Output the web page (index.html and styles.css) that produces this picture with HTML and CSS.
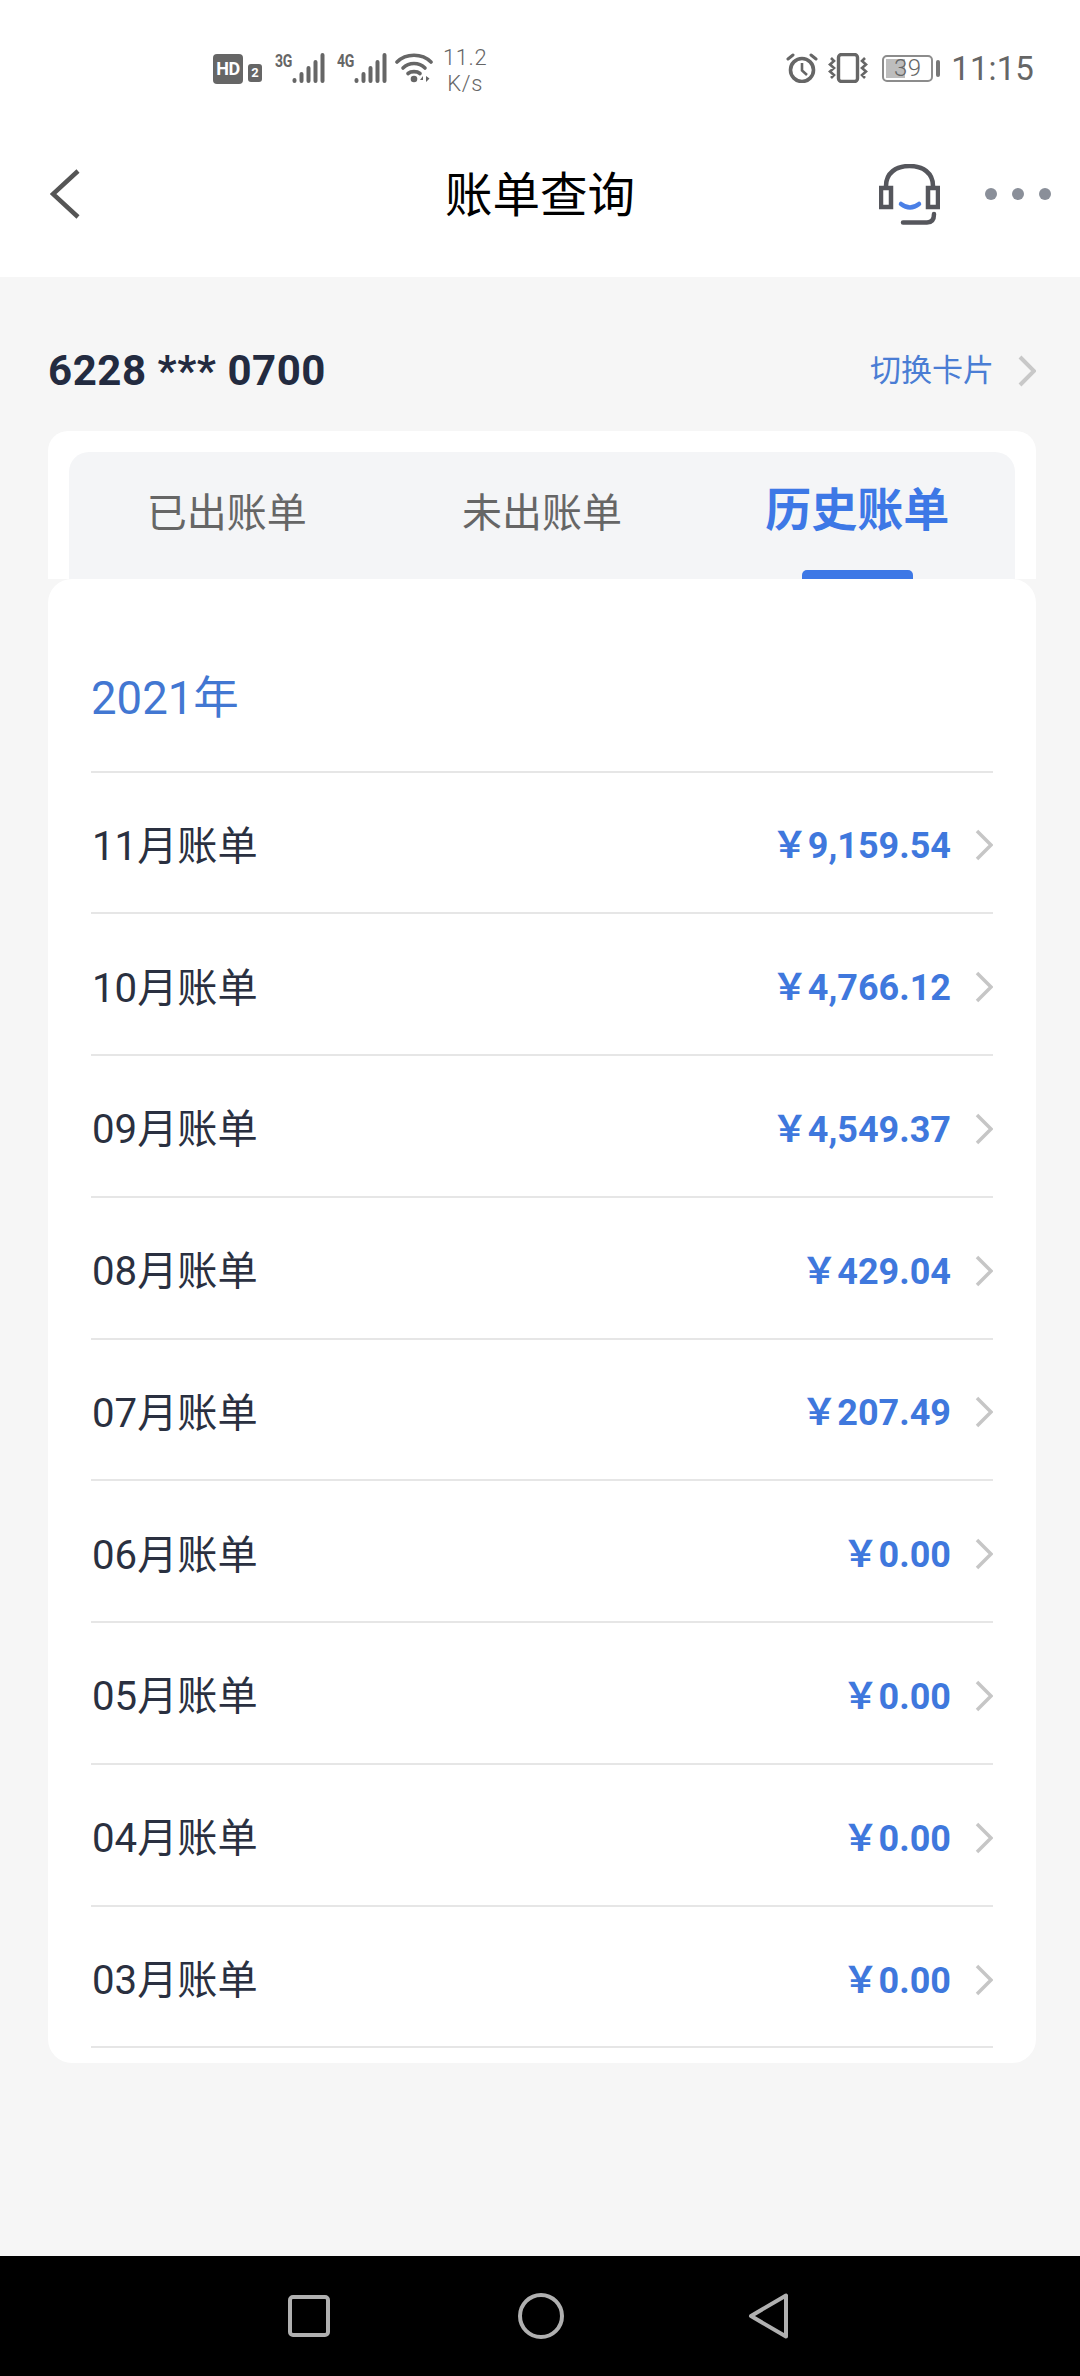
FILE: index.html
```html
<!DOCTYPE html>
<html lang="zh-CN">
<head>
<meta charset="utf-8">
<title>账单查询</title>
<link rel="stylesheet" href="styles.css">
</head>
<body>
<div class="page">
  <div class="status">
    <div class="status-left">
      <span class="hd">HD</span><span class="sim">2</span>
      <span class="net"><span class="net-label">3G</span>
        <svg class="bars" viewBox="0 0 33 30"><g fill="none" stroke="#666" stroke-width="4" stroke-linecap="round"><path d="M2.500 28v-1M9.500 28v-7M16.500 28v-13M23.500 28v-19M30.500 28V2"/></g></svg></span>
      <span class="net net-4g"><span class="net-label">4G</span>
        <svg class="bars" viewBox="0 0 33 30"><g fill="none" stroke="#666" stroke-width="4" stroke-linecap="round"><path d="M2.500 28v-1M9.500 28v-7M16.500 28v-13M23.500 28v-19M30.500 28V2"/></g></svg></span>
      <svg class="wifi" viewBox="0 0 38 30"><g fill="none" stroke="#666" stroke-width="3.600" stroke-linecap="round"><path d="M2 9C11 0 27 0 36 9"/><path d="M8 15C14 9 24 9 30 15"/><path d="M13 20.500C16 18 22 18 25 20.500"/></g><circle cx="19" cy="26" r="3.300" fill="#666"/><path d="M28 29v-6l-3 4h3zM31 23v6l3.500-3.500z" fill="#666"/></svg>
      <span class="speed"><span>11.2</span><span>K/s</span></span>
    </div>
    <div class="status-right">
      <svg class="alarm" viewBox="0 0 32 30"><circle cx="16" cy="17" r="11.500" fill="none" stroke="#666" stroke-width="3.600"/><path d="M16 10v7.500l5 4.500" fill="none" stroke="#666" stroke-width="2.600"/><path d="M2 6l5-4M30 6l-5-4" fill="none" stroke="#666" stroke-width="3" stroke-linecap="round"/></svg>
      <svg class="vibrate" viewBox="0 0 40 30"><rect x="10.500" y="1.500" width="19" height="27" rx="3" fill="none" stroke="#666" stroke-width="3.400"/><path d="M3 5l3 3-4 3.500 4 3.500-4 3.500 4 3.500-3 3M37 5l-3 3 4 3.500-4 3.500 4 3.500-4 3.500 3 3" fill="none" stroke="#666" stroke-width="2.600"/></svg>
      <span class="battery"><span class="battery-fill"></span><span class="battery-num">39</span></span>
      <span class="battery-nub"></span>
      <span class="time">11:15</span>
    </div>
  </div>

  <header class="header">
    <svg class="back" viewBox="0 0 30 50"><path d="M28 2L3 25l25 23" fill="none" stroke="#555" stroke-width="4.500"/></svg>
    <h1 class="title">账单查询</h1>
    <svg class="headset" viewBox="0 0 61 61"><g fill="none" stroke="#55565c" stroke-width="4.500"><path d="M7 22C7 9 17 2 30.500 2S54 9 54 22"/><rect x="2" y="24" width="10" height="19"/><rect x="49" y="24" width="10" height="19"/><path d="M24 58.500H48Q55 58.500 55 50" stroke-linecap="round"/></g><path d="M22 40Q31 47 40 40" fill="none" stroke="#4a7fe6" stroke-width="4.500" stroke-linecap="round"/></svg>
    <div class="dots"><i></i><i></i><i></i></div>
  </header>

  <main class="main">
    <div class="card-row">
      <span class="card-no">6228 *** 0700</span>
      <span class="switch">切换卡片</span>
      <svg class="chev-switch" viewBox="0 0 18 32"><path d="M2 2l14 14L2 30" fill="none" stroke="#c8c8c8" stroke-width="4"/></svg>
    </div>

    <section class="tab-card">
      <div class="tabs">
        <div class="tab">已出账单</div>
        <div class="tab">未出账单</div>
        <div class="tab tab-active">历史账单<span class="indicator"></span></div>
      </div>
    </section>

    <section class="list-card">
      <div class="year">2021年</div>
      <ul class="rows">
        <li class="row"><span class="month">11月账单</span><span class="amount">￥9,159.54</span><svg class="chev" viewBox="0 0 18 32"><path d="M2 2l14 14L2 30" fill="none" stroke="#c6c6c6" stroke-width="3.500"/></svg></li>
        <li class="row"><span class="month">10月账单</span><span class="amount">￥4,766.12</span><svg class="chev" viewBox="0 0 18 32"><path d="M2 2l14 14L2 30" fill="none" stroke="#c6c6c6" stroke-width="3.500"/></svg></li>
        <li class="row"><span class="month">09月账单</span><span class="amount">￥4,549.37</span><svg class="chev" viewBox="0 0 18 32"><path d="M2 2l14 14L2 30" fill="none" stroke="#c6c6c6" stroke-width="3.500"/></svg></li>
        <li class="row"><span class="month">08月账单</span><span class="amount">￥429.04</span><svg class="chev" viewBox="0 0 18 32"><path d="M2 2l14 14L2 30" fill="none" stroke="#c6c6c6" stroke-width="3.500"/></svg></li>
        <li class="row"><span class="month">07月账单</span><span class="amount">￥207.49</span><svg class="chev" viewBox="0 0 18 32"><path d="M2 2l14 14L2 30" fill="none" stroke="#c6c6c6" stroke-width="3.500"/></svg></li>
        <li class="row"><span class="month">06月账单</span><span class="amount">￥0.00</span><svg class="chev" viewBox="0 0 18 32"><path d="M2 2l14 14L2 30" fill="none" stroke="#c6c6c6" stroke-width="3.500"/></svg></li>
        <li class="row"><span class="month">05月账单</span><span class="amount">￥0.00</span><svg class="chev" viewBox="0 0 18 32"><path d="M2 2l14 14L2 30" fill="none" stroke="#c6c6c6" stroke-width="3.500"/></svg></li>
        <li class="row"><span class="month">04月账单</span><span class="amount">￥0.00</span><svg class="chev" viewBox="0 0 18 32"><path d="M2 2l14 14L2 30" fill="none" stroke="#c6c6c6" stroke-width="3.500"/></svg></li>
        <li class="row"><span class="month">03月账单</span><span class="amount">￥0.00</span><svg class="chev" viewBox="0 0 18 32"><path d="M2 2l14 14L2 30" fill="none" stroke="#c6c6c6" stroke-width="3.500"/></svg></li>
      </ul>
    </section>
  </main>

  <nav class="navbar">
    <svg class="nav-square" viewBox="0 0 42 42"><rect x="2" y="2" width="38" height="38" rx="3" fill="none" stroke="#b0b0b0" stroke-width="4"/></svg>
    <svg class="nav-circle" viewBox="0 0 46 46"><circle cx="23" cy="23" r="21" fill="none" stroke="#b0b0b0" stroke-width="4"/></svg>
    <svg class="nav-back" viewBox="0 0 42 46"><path d="M38 2.500V43.500L3 23z" fill="none" stroke="#b0b0b0" stroke-width="4" stroke-linejoin="round"/></svg>
  </nav>
</div>
</body>
</html>
```

FILE: styles.css
```css
* { box-sizing: border-box; }
html, body { margin: 0; padding: 0; }
body { font-family: Roboto, "Noto Sans CJK SC", sans-serif; background: #f6f6f6; }
.page { width: 1080px; height: 2376px; display: flex; flex-direction: column; overflow: hidden; }

/* status bar */
.status { height: 92px; background: #fff; color: #666; display: flex; justify-content: space-between; padding: 0 46px 0 213px; }
.status-left, .status-right { display: flex; align-items: flex-start; padding-top: 53px; }
.hd { width: 30px; height: 30px; background: #666; color: #fff; border-radius: 4px; font-size: 18px; font-weight: 700; line-height: 30px; text-align: center; letter-spacing: -.5px; margin-top: 1px; }
.sim { width: 14px; height: 18px; margin: 11px 0 0 5px; background: #666; color: #fff; border-radius: 3px; font-size: 13px; font-weight: 700; line-height: 18px; text-align: center; }
.net { display: flex; margin-left: 13px; width: 50px; }
.net-4g { margin-left: 12px; }
.net-label { font-size: 18px; font-weight: 700; line-height: 15px; width: 17px; letter-spacing: -.4px; transform: scaleX(.78); transform-origin: left; }
.bars { width: 33px; height: 30px; }
.wifi { width: 38px; height: 30px; margin-left: 8px; }
.speed { display: flex; flex-direction: column; align-items: center; margin: -8px 0 0 10px; font-size: 22px; line-height: 26px; letter-spacing: .6px; font-weight: 300; }
.alarm { width: 32px; height: 30px; }
.vibrate { width: 40px; height: 30px; margin-left: 10px; }
.battery { position: relative; width: 51px; height: 27px; margin: 2px 0 0 14px; border: 2px solid #8c8c8c; border-radius: 5px; display: flex; align-items: center; justify-content: center; }
.battery-fill { position: absolute; left: 2px; top: 2px; bottom: 2px; width: 19px; background: #bdbdbd; }
.battery-num { position: relative; font-size: 24px; font-weight: 300; line-height: 23px; letter-spacing: .5px; }
.battery-nub { width: 4px; height: 17px; margin: 7px 0 0 3px; background: #777; border-radius: 2px; }
.time { margin: -1px 0 0 11px; font-size: 33px; line-height: 34px; letter-spacing: .1px; font-weight: 400; }

/* header */
.header { height: 185px; background: #fff; display: flex; align-items: center; position: relative; padding: 19px 29px 0 50px; }
.back { width: 30px; height: 50px; }
.title { position: absolute; left: 0; right: 0; top: 72px; margin: 0; text-align: center; font-size: 47.500px; line-height: 64px; font-weight: 400; color: #000; }
.headset { width: 61px; height: 61px; margin: 0 0 0 auto; }
.dots { display: flex; gap: 15px; margin: 0 0 0 45px; }
.dots i { width: 12px; height: 12px; border-radius: 50%; background: #8a8f99; }

/* content */
.main { flex: 1; padding: 0 44px 0 48px; }
.card-row { height: 154px; display: flex; align-items: center; padding-top: 66px; padding-bottom: 33px; }
.card-no { font-size: 42px; font-weight: 700; color: #232b40; margin-right: auto; letter-spacing: .55px; }
.switch { font-size: 31px; color: #4a7dd4; margin-bottom: 6px; }
.chev-switch { width: 18px; height: 32px; margin-left: 24px; }

.tab-card { background: #fff; border-radius: 20px 20px 0 0; padding: 21px 21px 0; }
.tabs { height: 127px; background: #f4f5f7; border-radius: 20px 20px 0 0; display: grid; grid-template-columns: repeat(3, 1fr); }
.tab { display: flex; flex-direction: column; align-items: center; padding-top: 36px; font-size: 40px; line-height: 52px; color: #666; }
.tab-active { font-size: 46px; font-weight: 700; color: #3d78e6; padding-top: 30px; line-height: 56px; }
.indicator { width: 111px; height: 9px; margin-top: auto; background: #3d78e6; border-radius: 5px 5px 0 0; }

.list-card { background: #fff; border-radius: 24px; padding: 0 43px 15px; }
.year { height: 193.500px; padding-top: 93px; border-bottom: 2px solid #e6e6e6; font-size: 45.500px; line-height: 54px; color: #4277d2; }
.rows { list-style: none; margin: 0; padding: 0; }
.row { height: 141.780px; border-bottom: 2px solid #e6e6e6; display: flex; align-items: center; }
.month { font-size: 40.200px; color: #2a3040; margin-right: auto; padding-left: 1px; }
.amount { font-size: 36px; font-weight: 700; color: #3f78dd; }
.chev { width: 18px; height: 32px; margin: 6px 0 0 24px; }

/* system nav */
.navbar { height: 120px; background: #000; display: flex; align-items: center; padding: 0 0 0 288px; }
.nav-square { width: 42px; height: 42px; }
.nav-circle { width: 46px; height: 46px; margin-left: 188px; }
.nav-back { width: 42px; height: 46px; margin-left: 184px; }
```
